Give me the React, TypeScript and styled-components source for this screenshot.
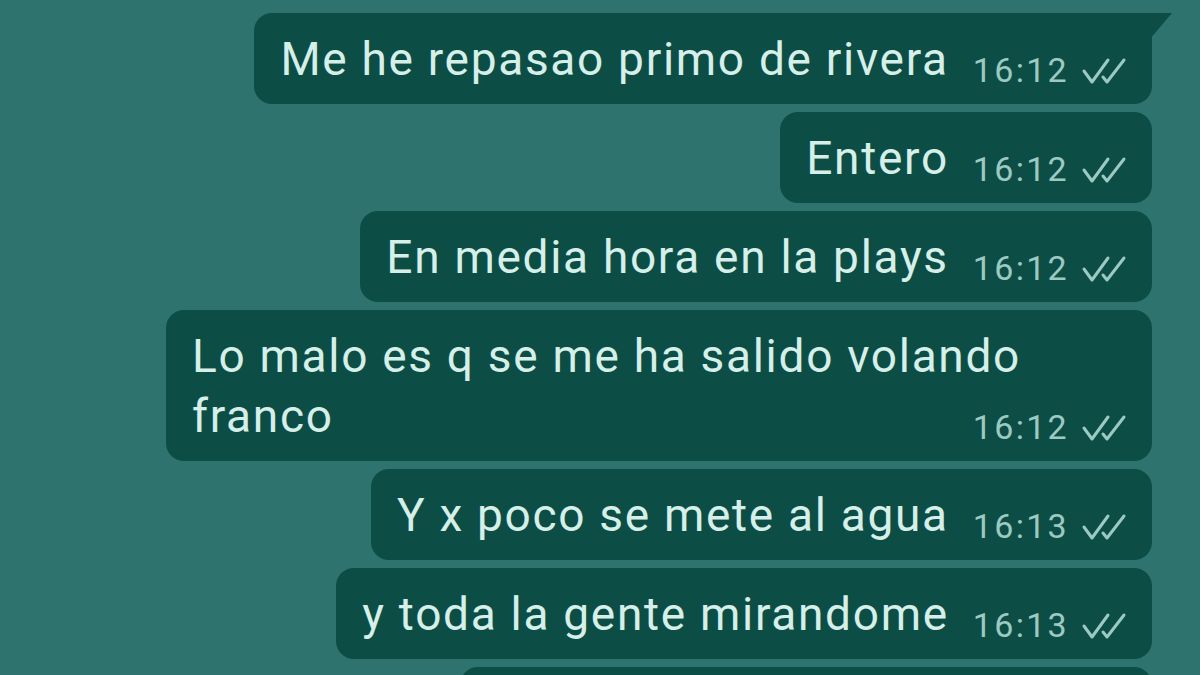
import styled, { createGlobalStyle } from "styled-components";

/////////////////////////////////////////////////////////////////////////////STYLE
const Global = createGlobalStyle`
  html, body {
    margin: 0;
    padding: 0;
    background: #2e736d;
  }
  body {
    font-family: Roboto, "Noto Sans", "Liberation Sans", sans-serif;
  }
`;

const Chat = styled.div`
  width: 1200px;
  height: 675px;
  overflow: hidden;
  box-sizing: border-box;
  padding: 13px 48px 0 0;
  display: flex;
  flex-direction: column;
  align-items: flex-end;
  gap: 8px;
  background: #2e736d;
`;

interface BubbleProps {
  $tail?: boolean;
  $width?: number;
}

const Bubble = styled.div<BubbleProps>`
  position: relative;
  flex-shrink: 0;
  box-sizing: border-box;
  display: flex;
  flex-wrap: wrap;
  align-items: flex-end;
  justify-content: flex-end;
  width: ${({ $width }) => ($width ? `${$width}px` : "auto")};
  min-height: 91px;
  padding: 16px 23px 15px 26px;
  background: #0c4e46;
  border-radius: ${({ $tail }) => ($tail ? "18px 0 18px 18px" : "18px")};

  &::after {
    content: "";
    display: ${({ $tail }) => ($tail ? "block" : "none")};
    position: absolute;
    top: 0;
    right: -20px;
    width: 22px;
    height: 26px;
    background: #0c4e46;
    clip-path: polygon(0 0, 100% 0, 0 100%);
  }
`;

const Text = styled.div<{ $full?: boolean }>`
  flex: ${({ $full }) => ($full ? "0 0 100%" : "1 0 auto")};
  font-size: 46px;
  line-height: 60px;
  letter-spacing: 1.7px;
  color: #d6efe9;
  white-space: pre-line;
`;

const Meta = styled.div`
  display: flex;
  align-items: center;
  gap: 12px;
  margin-left: 24px;
  margin-bottom: 2px;
  font-size: 34px;
  line-height: 34px;
  letter-spacing: 2.3px;
  color: #9cc9c1;
`;

const Ticks = styled.svg`
  width: 48px;
  height: 28px;
  margin-top: 2px;
  flex: none;
`;

interface Message {
  text: string;
  time: string;
  tail?: boolean;
  width?: number;
}

const messages: Message[] = [
  { text: "Me he repasao primo de rivera", time: "16:12", tail: true },
  { text: "Entero", time: "16:12" },
  { text: "En media hora en la plays", time: "16:12" },
  { text: "Lo malo es q se me ha salido volando\nfranco", time: "16:12", width: 986 },
  { text: "Y x poco se mete al agua", time: "16:13" },
  { text: "y toda la gente mirandome", time: "16:13" },
  { text: "", time: "", width: 692 },
];

function DoubleTick() {
  return (
    <Ticks viewBox="0 0 48 28" fill="none" stroke="#9cc9c1" strokeWidth="3" strokeLinecap="round" strokeLinejoin="round">
      <path d="M3 14 L11 25 L27 3" />
      <path d="M22 20 L26 25 L43 3" />
    </Ticks>
  );
}

/////////////////////////////////////////////////////////////////////////////COMPONENT
export default function App() {
  return (
    <>
      <Global />
      <Chat>
        {messages.map((m, i) => {
          const lines = m.text.split("\n");
          const last = lines.pop();
          return (
            <Bubble key={i} $tail={m.tail} $width={m.width}>
              {lines.length > 0 && <Text $full>{lines.join("\n")}</Text>}
              <Text>{last}</Text>
              {m.time && (
                <Meta>
                  <span>{m.time}</span>
                  <DoubleTick />
                </Meta>
              )}
            </Bubble>
          );
        })}
      </Chat>
    </>
  );
}
